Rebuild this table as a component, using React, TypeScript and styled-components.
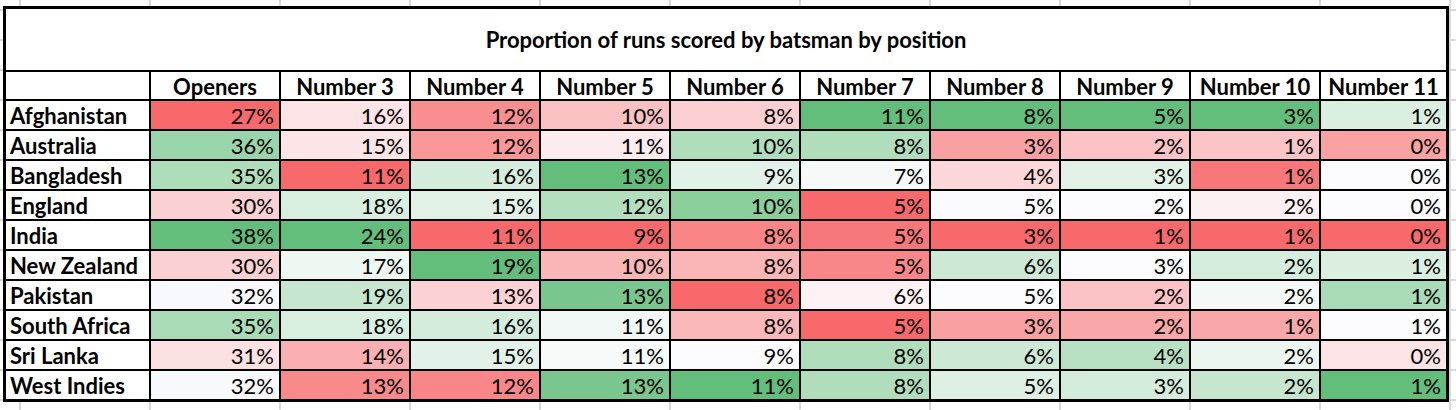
import React from "react";
import styled, { createGlobalStyle } from "styled-components";

const GlobalStyle = createGlobalStyle`
  html, body {
    margin: 0;
    padding: 0;
  }
  body {
    background-color: #ffffff;
    background-image:
      linear-gradient(to right, #d9d9d9 2px, transparent 2px),
      linear-gradient(to bottom, #d9d9d9 2px, transparent 2px);
    background-size: 130px 100%, 100% 30px;
    background-position: 19px 0, 0 9px;
    font-family: Lato, "Open Sans", "Liberation Sans", sans-serif;
    color: #000;
  }
`;

const Sheet = styled.div`
  padding: 6px 0 0 3px;
  min-height: 404px;
`;

const Grid = styled.div`
  display: grid;
  width: max-content;
  grid-template-columns: 143px repeat(9, 128px) 125px;
  grid-template-rows: 61px 27px repeat(10, 28px);
  gap: 2px;
  background: #000;
  border: 3px solid #000;
`;

const Title = styled.div`
  grid-column: 1 / -1;
  background: #fff;
  display: flex;
  align-items: center;
  justify-content: center;
  font-weight: 700;
  font-size: 22px;
  line-height: 1;
`;

const Cell = styled.div`
  background: #fff;
  display: flex;
  align-items: center;
  font-size: 22px;
  line-height: 1;
  padding-top: 2px;
  box-sizing: border-box;
  white-space: nowrap;
  overflow: hidden;
`;

const HeaderCell = styled(Cell)`
  justify-content: center;
  font-weight: 700;
`;

const NameCell = styled(Cell)`
  font-weight: 700;
  padding-left: 4px;
`;

const ValueCell = styled(Cell)<{ $bg: string }>`
  justify-content: flex-end;
  padding-right: 5px;
  background: ${(p) => p.$bg};
`;

const R = "#F8696B";
const G = "#63BE7B";
const W = "#FCFCFF";

const headers = [
  "",
  "Openers",
  "Number 3",
  "Number 4",
  "Number 5",
  "Number 6",
  "Number 7",
  "Number 8",
  "Number 9",
  "Number 10",
  "Number 11",
];

type Row = { name: string; cells: [string, string][] };

const rows: Row[] = [
  {
    name: "Afghanistan",
    cells: [
      ["27%", R],
      ["16%", "#FCE4E6"],
      ["12%", "#F98E90"],
      ["10%", "#FAC1C3"],
      ["8%", "#FBCFD1"],
      ["11%", G],
      ["8%", G],
      ["5%", G],
      ["3%", G],
      ["1%", "#DBEFE1"],
    ],
  },
  {
    name: "Australia",
    cells: [
      ["36%", "#9AD4AA"],
      ["15%", "#FCE5E7"],
      ["12%", "#F99698"],
      ["11%", "#FCECEE"],
      ["10%", "#B0DEBC"],
      ["8%", "#B0DEBC"],
      ["3%", "#F9A0A2"],
      ["2%", "#FBC3C5"],
      ["1%", "#FBC4C6"],
      ["0%", "#F9A1A3"],
    ],
  },
  {
    name: "Bangladesh",
    cells: [
      ["35%", "#AEDDBA"],
      ["11%", R],
      ["16%", "#D4ECDB"],
      ["13%", G],
      ["9%", "#E3F2E8"],
      ["7%", "#F5F9F8"],
      ["4%", "#FBD7D9"],
      ["3%", "#E1F1E6"],
      ["1%", "#F8777A"],
      ["0%", W],
    ],
  },
  {
    name: "England",
    cells: [
      ["30%", "#FBD0D2"],
      ["18%", "#D8EEDF"],
      ["15%", "#E1F1E6"],
      ["12%", "#B3DFBF"],
      ["10%", "#8ACE9C"],
      ["5%", R],
      ["5%", "#FBFBFE"],
      ["2%", W],
      ["2%", "#FCF0F2"],
      ["0%", W],
    ],
  },
  {
    name: "India",
    cells: [
      ["38%", G],
      ["24%", G],
      ["11%", R],
      ["9%", R],
      ["8%", "#F98587"],
      ["5%", "#F8777A"],
      ["3%", R],
      ["1%", R],
      ["1%", R],
      ["0%", R],
    ],
  },
  {
    name: "New Zealand",
    cells: [
      ["30%", "#FBD0D2"],
      ["17%", "#EEF7F2"],
      ["19%", G],
      ["10%", "#FAB5B7"],
      ["8%", "#FAB5B7"],
      ["5%", "#F98789"],
      ["6%", "#CDE9D5"],
      ["3%", W],
      ["2%", "#D5EDDC"],
      ["1%", "#DBEFE1"],
    ],
  },
  {
    name: "Pakistan",
    cells: [
      ["32%", "#F8F9FC"],
      ["19%", "#C6E6CF"],
      ["13%", "#FBD1D3"],
      ["13%", "#79C68E"],
      ["8%", R],
      ["6%", "#FCF2F4"],
      ["5%", W],
      ["2%", "#FBC3C5"],
      ["2%", "#F4F9F7"],
      ["1%", "#A9DBB6"],
    ],
  },
  {
    name: "South Africa",
    cells: [
      ["35%", "#A9DBB6"],
      ["18%", "#D8EEDF"],
      ["16%", "#D4ECDB"],
      ["11%", "#F2F8F6"],
      ["8%", "#FAB8BA"],
      ["5%", R],
      ["3%", "#F9A0A2"],
      ["2%", "#F9A7A9"],
      ["1%", "#FAA7A9"],
      ["1%", W],
    ],
  },
  {
    name: "Sri Lanka",
    cells: [
      ["31%", "#FCE1E3"],
      ["14%", "#FAB0B2"],
      ["15%", "#E3F2E8"],
      ["11%", "#F6FAF9"],
      ["9%", W],
      ["8%", "#B0DEBC"],
      ["6%", "#CDE9D5"],
      ["4%", "#B8E1C3"],
      ["2%", "#ECF6F1"],
      ["0%", "#FCE4E6"],
    ],
  },
  {
    name: "West Indies",
    cells: [
      ["32%", "#F8F9FC"],
      ["13%", "#F98A8C"],
      ["12%", "#F98789"],
      ["13%", "#79C68E"],
      ["11%", G],
      ["8%", "#B0DEBC"],
      ["5%", "#DDF0E3"],
      ["3%", "#D4ECDB"],
      ["2%", "#C6E6CF"],
      ["1%", G],
    ],
  },
];

export default function App() {
  return (
    <>
      <GlobalStyle />
      <Sheet>
        <Grid>
          <Title>Proportion of runs scored by batsman by position</Title>
          {headers.map((h, i) => (
            <HeaderCell key={`h${i}`}>{h}</HeaderCell>
          ))}
          {rows.map((r) => (
            <React.Fragment key={r.name}>
              <NameCell>{r.name}</NameCell>
              {r.cells.map(([v, bg], j) => (
                <ValueCell key={j} $bg={bg}>
                  {v}
                </ValueCell>
              ))}
            </React.Fragment>
          ))}
        </Grid>
      </Sheet>
    </>
  );
}
